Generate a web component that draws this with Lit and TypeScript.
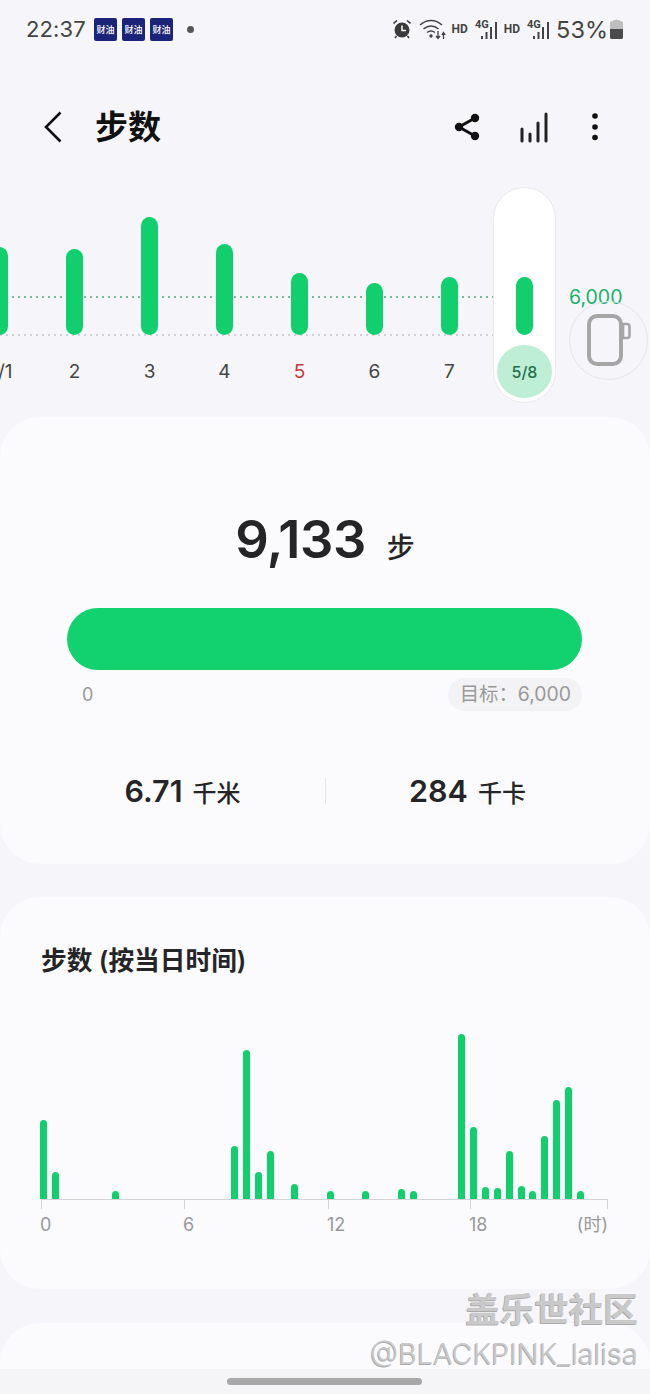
import { LitElement, css, html, svg } from "lit";
import { customElement } from "lit/decorators.js";

const days = [
  { label: "5/1", top: 247 },
  { label: "2", top: 249 },
  { label: "3", top: 217 },
  { label: "4", top: 244 },
  { label: "5", top: 273, holiday: true },
  { label: "6", top: 283 },
  { label: "7", top: 277 },
  { label: "5/8", top: 277, selected: true },
];

// half-hour slot index -> bar height in px
const hourly: Array<[number, number]> = [
  [0, 79], [1, 27], [6, 8], [16, 53], [17, 149], [18, 27], [19, 48], [21, 15],
  [24, 8], [27, 8], [30, 10], [31, 8], [35, 165], [36, 72], [37, 12], [38, 11],
  [39, 48], [40, 13], [41, 8], [42, 63], [43, 99], [44, 112], [45, 8],
];

const signal = () => svg`
  <g fill="#444">
    <text x="0" y="9.500" font-size="11" font-weight="700" font-family="Roboto, sans-serif">4G</text>
    <rect x="6" y="18" width="2" height="3" />
    <rect x="10.500" y="14" width="2" height="7" />
    <rect x="15" y="9" width="2" height="12" />
    <rect x="20" y="4" width="2" height="17" />
  </g>
`;

@customElement("app-root")
export class AppRoot extends LitElement {
  static styles = css`
    :host {
      display: block;
      width: 650px;
      height: 1394px;
      overflow: hidden;
      background: #f6f6fa;
      color: #252528;
      font-family: Inter, "Noto Sans CJK SC", sans-serif;
    }

    .page {
      position: relative;
      display: flex;
      flex-direction: column;
      height: 100%;
    }

    /* status bar */
    .status {
      display: flex;
      align-items: center;
      height: 58px;
      padding: 0 27px;
      color: #444;
      font-size: 22px;
    }
    .time {
      width: 67px;
      margin-left: -1px;
      margin-right: 1px;
      letter-spacing: 0.1px;
    }
    .app-icon {
      display: flex;
      align-items: center;
      justify-content: center;
      width: 23px;
      height: 23px;
      margin-right: 5px;
      border-radius: 2px;
      background: #1b2478;
      color: #fff;
      font-size: 9px;
      font-weight: 500;
      white-space: nowrap;
    }
    .dot {
      width: 7px;
      height: 7px;
      margin-left: 9px;
      border-radius: 50%;
      background: #555;
    }
    .status-right {
      display: flex;
      align-items: center;
      margin-left: auto;
    }
    .hd {
      font-family: Roboto, sans-serif;
      font-size: 12px;
      font-weight: 700;
      margin: 0 7px 0 6px;
    }
    .battery-text {
      margin: 0 2px 0 6px;
      font-size: 23.5px;
    }

    /* header */
    .header {
      display: flex;
      align-items: center;
      height: 46px;
      margin: 46px 0 37px;
      padding-left: 44px;
    }
    .title {
      margin-left: 33px;
      color: #111;
      font-size: 33px;
      font-weight: 700;
      line-height: 48px;
    }
    .actions {
      display: flex;
      align-items: center;
      margin-left: auto;
      padding-right: 52px;
    }

    /* weekly strip */
    .trend {
      position: relative;
      height: 216px;
      margin-bottom: 14px;
    }
    .line {
      position: absolute;
      left: 0;
      width: 493px;
      height: 2px;
      background-image: linear-gradient(to right, #d2d2d6 2px, transparent 2px);
      background-size: 6px 2px;
    }
    .line.goal {
      top: 109px;
      background-image: linear-gradient(to right, #7fb79a 2px, transparent 2px);
    }
    .line.base {
      top: 147px;
    }
    .days {
      position: relative;
      display: flex;
      margin-left: -38px;
    }
    .day {
      display: flex;
      flex-direction: column;
      align-items: center;
      width: 75px;
      height: 216px;
    }
    .day.selected {
      width: 63px;
      margin: 0 6px;
      box-sizing: border-box;
      border: 1px solid #e9e9ec;
      border-radius: 32px;
      background: #fff;
    }
    .plot {
      display: flex;
      align-items: flex-end;
      height: 148px;
      flex: none;
    }
    .day.selected .plot {
      height: 147px;
    }
    .bar {
      width: 17px;
      border-radius: 9px;
      background: #12cf6e;
    }
    .day-label {
      margin-top: 24px;
      color: #444;
      font-size: 19px;
      line-height: 26px;
      white-space: nowrap;
    }
    .day-label.holiday {
      color: #c5383c;
    }
    .day-label.selected {
      display: flex;
      align-items: center;
      justify-content: center;
      width: 55px;
      height: 53px;
      margin-top: 10px;
      border-radius: 50%;
      background: #bfeed6;
      color: #22704a;
      font-size: 16px;
      font-weight: 500;
    }
    .goal-text {
      position: absolute;
      left: 569px;
      top: 98px;
      color: #17b26a;
      font-size: 19.5px;
      line-height: 24px;
    }
    .watch {
      position: absolute;
      left: 569px;
      top: 114px;
      display: flex;
      align-items: center;
      justify-content: center;
      box-sizing: border-box;
      width: 79px;
      height: 79px;
      border: 1.5px solid #e6e6e8;
      border-radius: 50%;
    }

    /* cards */
    .card {
      border-radius: 40px;
      background: #fbfbfe;
    }
    .summary {
      height: 447px;
      margin-bottom: 33px;
      padding-top: 91px;
      box-sizing: border-box;
    }
    .total {
      display: flex;
      align-items: baseline;
      justify-content: center;
      gap: 21px;
      height: 62px;
      line-height: 62px;
    }
    .total b {
      font-size: 52.5px;
      font-weight: 600;
      letter-spacing: -0.5px;
    }
    .total span {
      font-size: 28px;
      font-weight: 500;
    }
    .progress {
      height: 62px;
      margin: 38px 68px 0 67px;
      border-radius: 31px;
      background: #12d16f;
    }
    .scale {
      display: flex;
      align-items: center;
      justify-content: space-between;
      margin: 8px 68px 0 82px;
      color: #999;
      font-size: 18px;
    }
    .target {
      height: 33px;
      padding: 0 11px 0 12px;
      border-radius: 17px;
      background: #f3f3f5;
      font-size: 19.4px;
      line-height: 33px;
    }
    .stats {
      display: grid;
      grid-template-columns: 1fr 1fr;
      margin: 64px 40px 0;
    }
    .stat {
      display: flex;
      align-items: baseline;
      justify-content: center;
      gap: 10px;
      height: 32px;
      line-height: 32px;
    }
    .stat + .stat {
      position: relative;
    }
    .stat + .stat::before {
      content: "";
      position: absolute;
      left: 0;
      top: 3px;
      height: 26px;
      border-left: 1px solid #e4e4e7;
    }
    .stat b {
      font-size: 30.5px;
      font-weight: 600;
    }
    .stat span {
      font-size: 24px;
      font-weight: 500;
    }

    .hourly {
      height: 392px;
      margin-bottom: 34px;
      padding: 48px 0 0 41px;
      box-sizing: border-box;
    }
    .hourly h2 {
      margin: 0;
      font-size: 25.7px;
      font-weight: 600;
      line-height: 32px;
    }
    .bars {
      display: grid;
      grid-template-columns: repeat(48, 11.95px);
      align-items: end;
      height: 165px;
      margin: 57px 0 0 -1px;
    }
    .hbar {
      grid-row: 1;
      width: 7px;
      border-radius: 4px 4px 0 0;
      background: #12cf6e;
    }
    .axis {
      display: grid;
      grid-template-columns: 143px 144px 142px 138px;
      width: 567px;
    }
    .tick {
      position: relative;
      display: flex;
      justify-content: space-between;
      height: 37px;
      padding-top: 15px;
      box-sizing: border-box;
      border-top: 1.5px solid #d4d4d6;
      color: #999;
      font-size: 18px;
      line-height: 20px;
    }
    .tick::before {
      content: "";
      position: absolute;
      left: 0;
      top: 0;
      height: 9px;
      border-left: 1.5px solid #d4d4d6;
    }
    .tick:last-child::after {
      content: "";
      position: absolute;
      right: 0;
      top: 0;
      height: 9px;
      border-left: 1.5px solid #d4d4d6;
    }
    .tick span:first-child {
      margin-left: -1px;
    }

    .next {
      flex: 1;
      border-radius: 40px 40px 0 0;
    }

    .nav {
      display: flex;
      align-items: center;
      justify-content: center;
      height: 25px;
      background: #f5f5f7;
    }
    .nav i {
      width: 195px;
      height: 7px;
      margin-right: 2px;
      border-radius: 4px;
      background: #a8a8a8;
    }

    .watermark {
      position: absolute;
      right: 12px;
      top: 1289px;
      color: #c9c9c9;
      text-align: right;
      text-shadow: -1px 1px 0 #77777799;
    }
    .watermark div:first-child {
      font-size: 34.5px;
      font-weight: 700;
      line-height: 42px;
    }
    .watermark div:last-child {
      margin-top: 4px;
      font-size: 28.8px;
      font-weight: 300;
      line-height: 38px;
    }
  `;

  private statusIcons() {
    return html`
      <svg width="18" height="20" viewBox="0 0 18 20" style="margin-right:8px">
        <circle cx="9" cy="11" r="7.500" fill="#3a3a3a" />
        <path d="M9 6.500V11.500H13" fill="none" stroke="#f6f6fa" stroke-width="1.600" />
        <path d="M0.500 4.500L4 1.500M17.500 4.500L14 1.500M3.500 17L2 19M14.500 17L16 19" stroke="#3a3a3a" stroke-width="1.600" />
      </svg>
      <svg width="27" height="22" viewBox="0 0 27 22">
        <g fill="none" stroke="#444" stroke-width="1.500">
          <path d="M1 7C7.500 1 16.500 1 23 7" />
          <path d="M4.500 11C9 7 15 7 19.500 11" />
          <path d="M8 14.500C10.500 12.500 13.500 12.500 16 14.500" />
        </g>
        <circle cx="12" cy="18" r="1.700" fill="#444" />
        <path d="M19 13V20M17 18L19 20.500L21 18M24.500 21V15M22.800 17L24.500 14.500L26.200 17" fill="none" stroke="#444" stroke-width="1.300" />
      </svg>
      <span class="hd">HD</span>
      <svg width="23" height="22" viewBox="0 0 23 22">${signal()}</svg>
      <span class="hd">HD</span>
      <svg width="23" height="22" viewBox="0 0 23 22">${signal()}</svg>
      <span class="battery-text">53%</span>
      <svg width="13" height="20" viewBox="0 0 13 20">
        <path d="M3.500 1.500C3.500 0.500 9.500 0.500 9.500 1.500L12 2.500C12.800 2.800 13 3.200 13 4V10H0V4C0 3.200 0.200 2.800 1 2.500Z" fill="#bdbdbd" />
        <path d="M0 10H13V18.500C13 19.300 12.300 20 11.500 20H1.500C0.700 20 0 19.300 0 18.500Z" fill="#4a4a4a" />
      </svg>
    `;
  }

  private headerIcons() {
    return html`
      <svg width="26" height="28" viewBox="0 0 26 28">
        <path d="M21 5L5 14L21 23" fill="none" stroke="#111" stroke-width="3" />
        <circle cx="21" cy="5" r="4.200" fill="#111" />
        <circle cx="5" cy="14" r="4.200" fill="#111" />
        <circle cx="21" cy="23" r="4.200" fill="#111" />
      </svg>
      <svg width="28" height="31" viewBox="0 0 28 31" style="margin-left:40px">
        <g stroke="#222" stroke-width="3" stroke-linecap="round">
          <path d="M2 17V29" />
          <path d="M10 22V29" />
          <path d="M18 11V29" />
          <path d="M26 2V29" />
        </g>
      </svg>
      <svg width="6" height="28" viewBox="0 0 6 28" style="margin-left:44px">
        <circle cx="3" cy="3" r="2.800" fill="#111" />
        <circle cx="3" cy="14" r="2.800" fill="#111" />
        <circle cx="3" cy="24.500" r="2.800" fill="#111" />
      </svg>
    `;
  }

  render() {
    return html`
      <div class="page">
        <div class="status">
          <span class="time">22:37</span>
          ${[0, 1, 2].map(() => html`<span class="app-icon">财油</span>`)}
          <span class="dot"></span>
          <div class="status-right">${this.statusIcons()}</div>
        </div>

        <div class="header">
          <svg width="18" height="32" viewBox="0 0 18 32">
            <path d="M16.500 1.500L2 16L16.500 30.500" fill="none" stroke="#111" stroke-width="2.600" />
          </svg>
          <span class="title">步数</span>
          <div class="actions">${this.headerIcons()}</div>
        </div>

        <div class="trend">
          <div class="line goal"></div>
          <div class="line base"></div>
          <div class="days">
            ${days.map(
              (d) => html`
                <div class="day ${d.selected ? "selected" : ""}">
                  <div class="plot">
                    <div class="bar" style="height:${335 - d.top}px"></div>
                  </div>
                  <div class="day-label ${d.holiday ? "holiday" : ""} ${d.selected ? "selected" : ""}">
                    ${d.label}
                  </div>
                </div>
              `
            )}
          </div>
          <span class="goal-text">6,000</span>
          <div class="watch">
            <svg width="46" height="54" viewBox="0 0 46 54">
              <rect x="3" y="2" width="32" height="48" rx="8" fill="none" stroke="#a6a6a6" stroke-width="4" />
              <path d="M37 10H41C42.500 10 43.500 11 43.500 12.500V21.500C43.500 23 42.500 24 41 24H37Z" fill="none" stroke="#a6a6a6" stroke-width="2.600" />
            </svg>
          </div>
        </div>

        <section class="card summary">
          <div class="total"><b>9,133</b><span>步</span></div>
          <div class="progress"></div>
          <div class="scale">
            <span>0</span>
            <span class="target">目标：6,000</span>
          </div>
          <div class="stats">
            <div class="stat"><b>6.71</b><span>千米</span></div>
            <div class="stat"><b>284</b><span>千卡</span></div>
          </div>
        </section>

        <section class="card hourly">
          <h2>步数 (按当日时间)</h2>
          <div class="bars">
            ${hourly.map(
              ([slot, h]) => html`<div class="hbar" style="grid-column:${slot + 1};height:${h}px"></div>`
            )}
          </div>
          <div class="axis">
            <div class="tick"><span>0</span></div>
            <div class="tick"><span>6</span></div>
            <div class="tick"><span>12</span></div>
            <div class="tick"><span>18</span><span>(时)</span></div>
          </div>
        </section>

        <div class="card next"></div>
        <div class="nav"><i></i></div>

        <div class="watermark">
          <div>盖乐世社区</div>
          <div>@BLACKPINK_lalisa</div>
        </div>
      </div>
    `;
  }
}
